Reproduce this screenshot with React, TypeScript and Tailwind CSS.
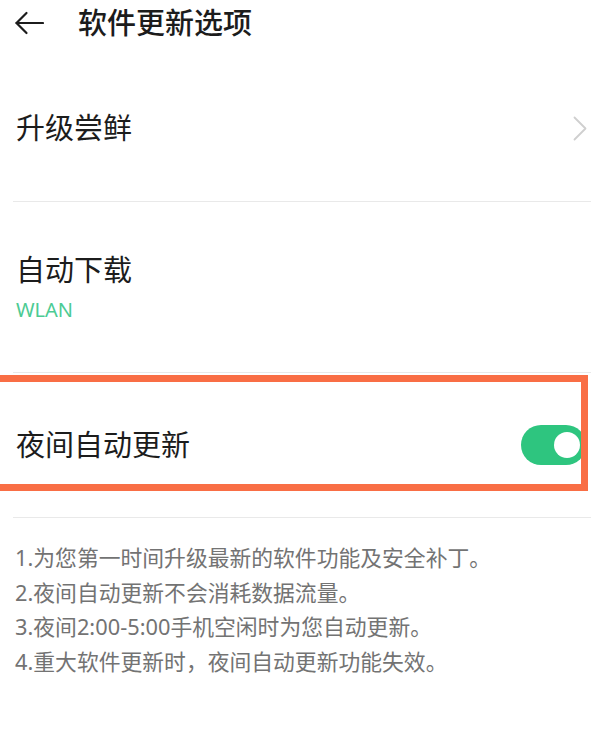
import React from "react";

const FONT = { fontFamily: '"Noto Sans", "Noto Sans CJK SC", sans-serif' } as const;

function Divider() {
  return <div className="ml-[13px] h-px bg-[#e9e9e9]" />;
}

export default function App() {
  return (
    <div className="w-[591px] h-[736px] bg-white overflow-hidden text-[#1c1c1c]" style={FONT}>
      {/* Header */}
      <div className="h-[46px] flex items-center pl-[14px]">
        <svg width="30" height="24" viewBox="0 0 30 24" fill="none" stroke="#1c1c1c" strokeWidth="2.2" strokeLinecap="round" strokeLinejoin="round">
          <path d="M29 12H2.5" />
          <path d="M12.5 2L2.5 12L12.5 22" />
        </svg>
        <div className="ml-[34px] text-[29px] leading-[40px] font-medium">软件更新选项</div>
      </div>

      {/* 升级尝鲜 */}
      <div className="flex items-center justify-between pl-[16px] pr-[4px] pt-[62px] pb-[53px]">
        <div className="text-[29px] leading-[40px]">升级尝鲜</div>
        <svg width="14" height="25" viewBox="0 0 14 25" fill="none" stroke="#cfcfcf" strokeWidth="1.8" strokeLinecap="round" strokeLinejoin="round">
          <path d="M1.5 1.5L12.5 12.5L1.5 23.5" />
        </svg>
      </div>
      <Divider />

      {/* 自动下载 */}
      <div className="pl-[16px] pt-[48px] pb-[48px]">
        <div className="text-[29px] leading-[40px]">自动下载</div>
        <div className="mt-[6px] text-[20px] leading-[28px] text-[#4ccb93]">WLAN</div>
      </div>
      <Divider />

      {/* 夜间自动更新 */}
      <div className="relative">
        <div className="flex items-center justify-between pl-[16px] pr-[5px] pt-[52px] pb-[52px]">
          <div className="text-[29px] leading-[40px]">夜间自动更新</div>
          <div className="w-[65px] h-[40px] rounded-full bg-[#2ec57f] flex items-center justify-end pr-[6px]">
            <div className="w-[26px] h-[26px] rounded-full bg-white" />
          </div>
        </div>
        <div className="pointer-events-none absolute left-0 top-[2px] w-[588px] h-[116px] border-[7px] border-l-0 border-[#f96e45]" />
      </div>
      <Divider />

      {/* Notes */}
      <div className="pl-[15px] pt-[23px] text-[21.8px] leading-[34.7px] text-[#737373]">
        <div>1.为您第一时间升级最新的软件功能及安全补丁。</div>
        <div>2.夜间自动更新不会消耗数据流量。</div>
        <div>3.夜间2:00-5:00手机空闲时为您自动更新。</div>
        <div>4.重大软件更新时，夜间自动更新功能失效。</div>
      </div>
    </div>
  );
}
